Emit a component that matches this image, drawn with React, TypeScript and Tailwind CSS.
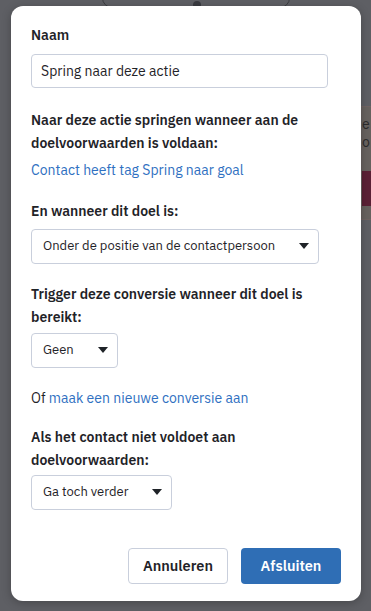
import { useState } from "react";

function Caret() {
  return (
    <svg width="10" height="6" viewBox="0 0 10 6" className="shrink-0">
      <path d="M0 0h10L5 6z" fill="#1f2328" />
    </svg>
  );
}

function Select({ value, className }: { value: string; className: string }) {
  return (
    <div
      className={`flex h-[35px] items-center justify-between rounded-[4px] border border-[#c9cfdc] bg-white pl-[11px] pr-[9px] text-[13px] text-[#1f2328] ${className}`}
    >
      <span>{value}</span>
      <Caret />
    </div>
  );
}

function Label({ children }: { children: React.ReactNode }) {
  return (
    <p className="text-[14px] font-semibold leading-[23px] text-[#1f2328]">
      {children}
    </p>
  );
}

export default function App() {
  const [name, setName] = useState("Spring naar deze actie");

  return (
    <div
      className="relative h-[611px] w-[371px] overflow-hidden bg-[#5e5f64]"
      style={{ fontFamily: '"IBM Plex Sans", "Noto Sans", Arial, sans-serif' }}
    >
      {/* page behind the overlay */}
      <div className="absolute left-[102px] top-[-12px] h-[20px] w-[188px] rounded-full border border-[#3a3b40]" />
      <div className="absolute left-[193px] top-[1px] h-[8px] w-[8px] rounded-full bg-[#3a3b40]" />
      <div className="absolute left-[352px] top-[106px] h-[114px] w-[19px] border-y border-l border-[#6f6362] bg-[#67625f] pl-[9px] pt-[8px] text-[14px] leading-[18px] text-[#2c2b2b]">
        <p>e</p>
        <p>o</p>
        <div className="mt-[20px] h-[35px] w-full bg-[#5b2136]" />
      </div>

      {/* modal */}
      <div className="absolute left-[11px] top-[6px] flex h-[595px] w-[350px] flex-col rounded-[12px] bg-white px-[20px] pt-[17.5px] shadow-[0_2px_10px_rgba(0,0,0,0.25)]">
        <Label>Naam</Label>
        <input
          value={name}
          onChange={(e) => setName(e.target.value)}
          className="mt-[7.5px] h-[34px] w-[297px] rounded-[4px] border border-[#c9cfdc] px-[9px] text-[14px] text-[#1f2328] outline-none"
        />

        <div className="mt-[21px]">
          <Label>
            Naar deze actie springen wanneer aan de doelvoorwaarden is voldaan:
          </Label>
          <a className="mt-[3.5px] block text-[14px] leading-[22px] text-[#2f70c1]">
            Contact heeft tag Spring naar goal
          </a>
        </div>

        <div className="mt-[19.5px]">
          <Label>En wanneer dit doel is:</Label>
          <Select value="Onder de positie van de contactpersoon" className="mt-[5.5px] w-[288px]" />
        </div>

        <div className="mt-[19.5px]">
          <Label>Trigger deze conversie wanneer dit doel is bereikt:</Label>
          <Select value="Geen" className="mt-[3.5px] w-[87px]" />
        </div>

        <p className="mt-[19px] text-[14px] leading-[22px] text-[#1f2328]">
          Of <a className="text-[#2f70c1]">maak een nieuwe conversie aan</a>
        </p>

        <div className="mt-[17.5px]">
          <Label>Als het contact niet voldoet aan doelvoorwaarden:</Label>
          <Select value="Ga toch verder" className="mt-[2.5px] w-[141px]" />
        </div>

        <div className="mt-auto mb-[17px] flex justify-end gap-[13px]">
          <button
            type="button"
            className="h-[36px] w-[100px] rounded-[4px] border border-[#c9cfdc] bg-white text-[14.5px] font-semibold text-[#1f2328]"
          >
            Annuleren
          </button>
          <button
            type="button"
            className="h-[36px] w-[100px] rounded-[4px] bg-[#2f6eb5] text-[14.5px] font-semibold text-white"
          >
            Afsluiten
          </button>
        </div>
      </div>
    </div>
  );
}
